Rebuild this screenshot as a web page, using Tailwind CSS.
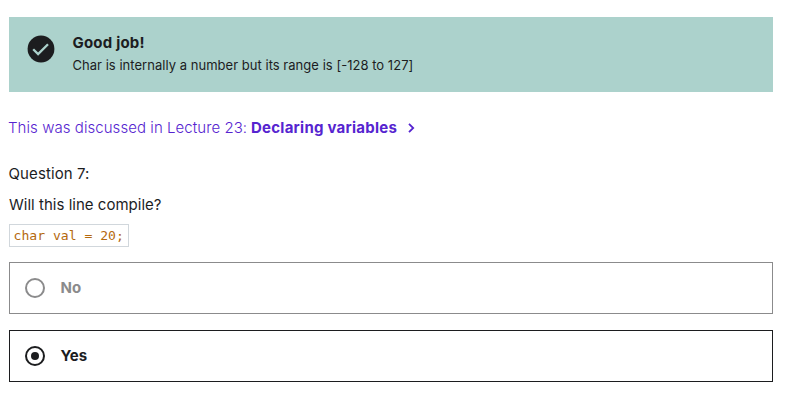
<!DOCTYPE html>
<html lang="en">
<head>
<meta charset="utf-8">
<title>Quiz</title>
<script src="https://cdn.jsdelivr.net/npm/@tailwindcss/browser@4"></script>
</head>
<body class="bg-white font-[Inter,sans-serif] text-[#1c1d1f] text-[15px]">
<main class="ml-[9px] w-[764px] pt-[17px] flex flex-col items-start">
  <section class="flex h-[75px] w-full bg-[#acd2cc] pl-[18px] pt-[16px]">
    <svg class="mt-[2px] size-7 shrink-0" viewBox="0 0 28 28"><circle cx="14" cy="14" r="13.4" fill="#1c1d1f"/><path d="M6.2 14.2l4.9 4.9 9.9-9.9" fill="none" stroke="#acd2cc" stroke-width="2.3"/></svg>
    <div class="ml-[17.5px] whitespace-nowrap">
      <h2 class="font-bold leading-[20px] tracking-[0.2px]">Good job!</h2>
      <p class="mt-[2px] text-[13px] leading-[20px] tracking-[0.03px]">Char is internally a number but its range is [-128 to 127]</p>
    </div>
  </section>
  <a class="mt-[24px] -ml-px flex h-6 items-center whitespace-nowrap text-[#5624d0]"><span class="w-[243px] font-light tracking-[0.06px]">This was discussed in Lecture 23:</span><span class="font-bold tracking-[0.25px]">Declaring variables</span>
    <svg class="ml-[11px] h-[10px] w-[7px]" viewBox="0 0 7 10"><path d="M1 .8L5.2 5 1 9.2" fill="none" stroke="#5624d0" stroke-width="1.8"/></svg>
  </a>
  <p class="mt-[22px] -ml-[0.5px] leading-6 tracking-[0.1px]">Question 7:</p>
  <p class="mt-[7px] leading-6 tracking-[0.02px]">Will this line compile?</p>
  <code class="mt-[7px] h-[23px] w-[120px] whitespace-nowrap border border-[#d1d7dc] pl-[3.5px] font-['DejaVu_Sans_Mono',monospace] text-[13.1px] leading-[22px] text-[#b4690e]">char val = 20;</code>
  <div class="mt-[15px] flex h-[52px] w-full items-center border border-[#8b8b8c] pl-[15px] font-bold text-[#8b8b8c]">
    <svg class="mr-[15.5px] size-5" viewBox="0 0 20 20"><circle cx="10" cy="10" r="9" fill="none" stroke="#8b8b8c" stroke-width="2"/></svg><span>No</span>
  </div>
  <div class="mt-[16px] flex h-[52px] w-full items-center border border-[#1c1d1f] pl-[15px] font-bold">
    <svg class="mr-[15.5px] size-5" viewBox="0 0 20 20"><circle cx="10" cy="10" r="9" fill="none" stroke="#1c1d1f" stroke-width="2"/><circle cx="10" cy="10" r="4" fill="#1c1d1f"/></svg><span>Yes</span>
  </div>
</main>
</body>
</html>
